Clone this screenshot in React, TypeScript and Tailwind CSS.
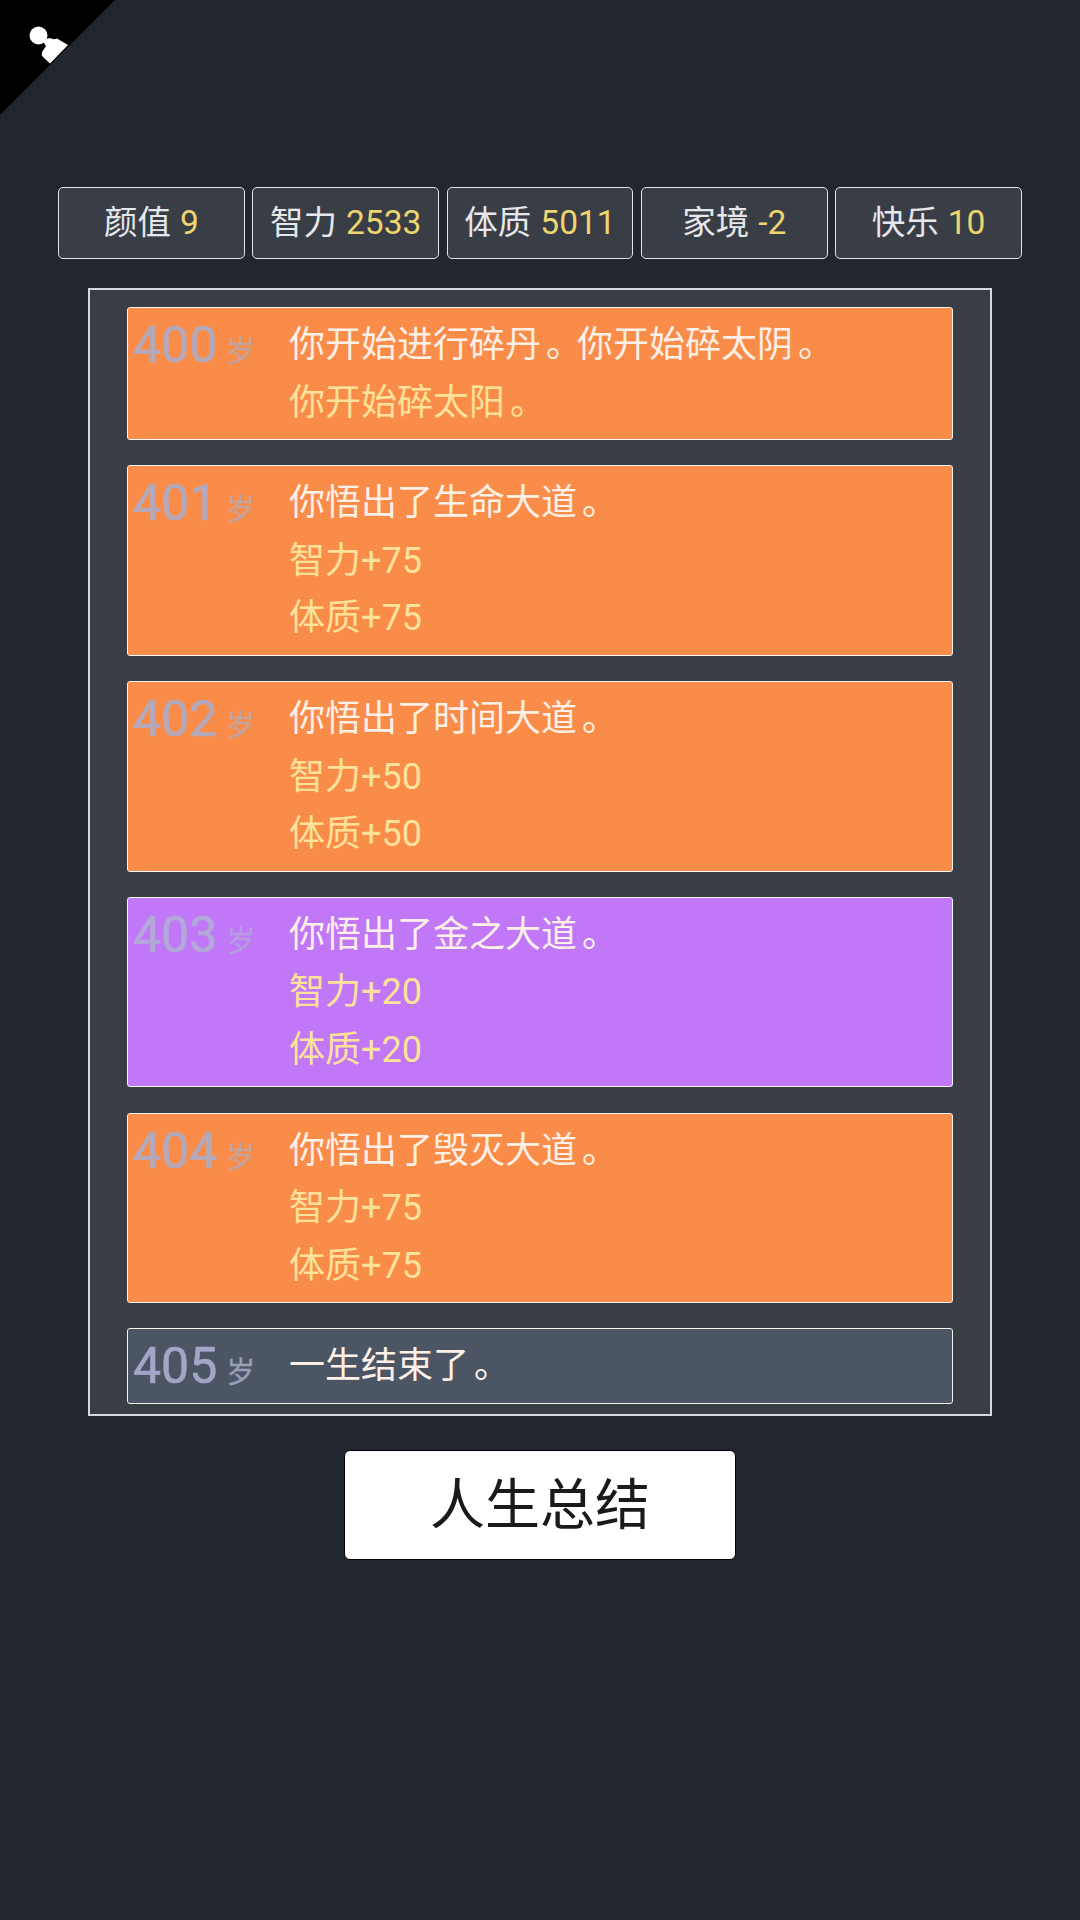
const font = "[font-family:Roboto,'Noto_Sans_CJK_SC',sans-serif]"

const stats = [
  { label: '颜值', value: '9' },
  { label: '智力', value: '2533' },
  { label: '体质', value: '5011' },
  { label: '家境', value: '-2' },
  { label: '快乐', value: '10' },
]

const rows = [
  { age: 400, bg: 'bg-[#fa8c4a]', age_color: 'text-[#b4a9bb]', unit_color: 'text-[#c4a39c]', lines: ['你开始进行碎丹。你开始碎太阴。'], effects: ['你开始碎太阳。'] },
  { age: 401, bg: 'bg-[#fa8c4a]', age_color: 'text-[#b4a9bb]', unit_color: 'text-[#c4a39c]', lines: ['你悟出了生命大道。'], effects: ['智力+75', '体质+75'] },
  { age: 402, bg: 'bg-[#fa8c4a]', age_color: 'text-[#b4a9bb]', unit_color: 'text-[#c4a39c]', lines: ['你悟出了时间大道。'], effects: ['智力+50', '体质+50'] },
  { age: 403, bg: 'bg-[#c077f8]', age_color: 'text-[#b3a8d8]', unit_color: 'text-[#b79ce0]', lines: ['你悟出了金之大道。'], effects: ['智力+20', '体质+20'] },
  { age: 404, bg: 'bg-[#fa8c4a]', age_color: 'text-[#b4a9bb]', unit_color: 'text-[#c4a39c]', lines: ['你悟出了毁灭大道。'], effects: ['智力+75', '体质+75'] },
  { age: 405, bg: 'bg-[#4b5563]', age_color: 'text-[#a5a5c8]', unit_color: 'text-[#9a9db8]', lines: ['一生结束了。'], effects: [] },
]

// the source font sets 。 nearer the middle of its cell
function Text({ value }: { value: string }) {
  const parts = value.split('。')
  return (
    <>
      {parts.map((p, i) => (
        <span key={i}>
          {p}
          {i < parts.length - 1 && <span className="ml-[5px] mr-[-5px]">。</span>}
        </span>
      ))}
    </>
  )
}

function Corner() {
  return (
    <div className="absolute left-0 top-0 w-[115px] h-[115px] bg-black [clip-path:polygon(0_0,100%_0,0_100%)]">
      <svg width="115" height="115" viewBox="0 0 115 115">
        <circle cx="38.5" cy="35.5" r="9" fill="#fff" />
        <path d="M42 40 L46 46 L42 52 Q41 55 43 57 L50 63.5 L68 45 L57 38.5 Q53 40 50 38 Z" fill="#fff" />
      </svg>
    </div>
  )
}

export default function App() {
  return (
    <div className={`relative w-[1080px] h-[1920px] bg-[#22262f] pt-[187px] ${font}`}>
      <Corner />

      {/* 属性 */}
      <div className="flex gap-[7.5px] mx-[58px]">
        {stats.map((s) => (
          <div
            key={s.label}
            className="flex-1 h-[72px] flex items-center justify-center gap-[9px] rounded-[5px] border border-[#e2e4e8] bg-[#393e46] text-[33.5px] text-[#e5e7eb]"
          >
            <span>{s.label}</span>
            <span className="text-[#eed56e]">{s.value}</span>
          </div>
        ))}
      </div>

      {/* 履历 */}
      <div className="mt-[29px] mx-[88px] h-[1128px] border-2 border-[#d5d8dc] bg-[#393e46] px-[37px] pt-[17px] flex flex-col gap-[25.3px]">
        {rows.map((r) => (
          <div key={r.age} className={`flex rounded-[3px] border border-[#f8f4f0] ${r.bg} pt-[9px] pb-[7px] leading-[57.5px]`}>
            <div className="w-[161px] h-[57.5px] shrink-0 pl-[5px] flex items-baseline">
              <span className={`text-[50px] [-webkit-text-stroke:0.6px] ${r.age_color}`}>{r.age}</span>
              <span className={`ml-[9px] text-[29px] [-webkit-text-stroke:0.4px] ${r.unit_color}`}>岁</span>
            </div>
            <div className="text-[36px] whitespace-nowrap">
              {r.lines.map((l) => (
                <div key={l} className="text-[#fdf0e6]"><Text value={l} /></div>
              ))}
              {r.effects.map((e) => (
                <div key={e} className="text-[#fde29a]"><Text value={e} /></div>
              ))}
            </div>
          </div>
        ))}
      </div>

      <div className="mt-[34px] mx-auto w-[392px] h-[110px] flex items-center justify-center rounded-[6px] border border-black bg-white text-[55px] text-[#1a1a1a]">
        人生总结
      </div>
    </div>
  )
}
